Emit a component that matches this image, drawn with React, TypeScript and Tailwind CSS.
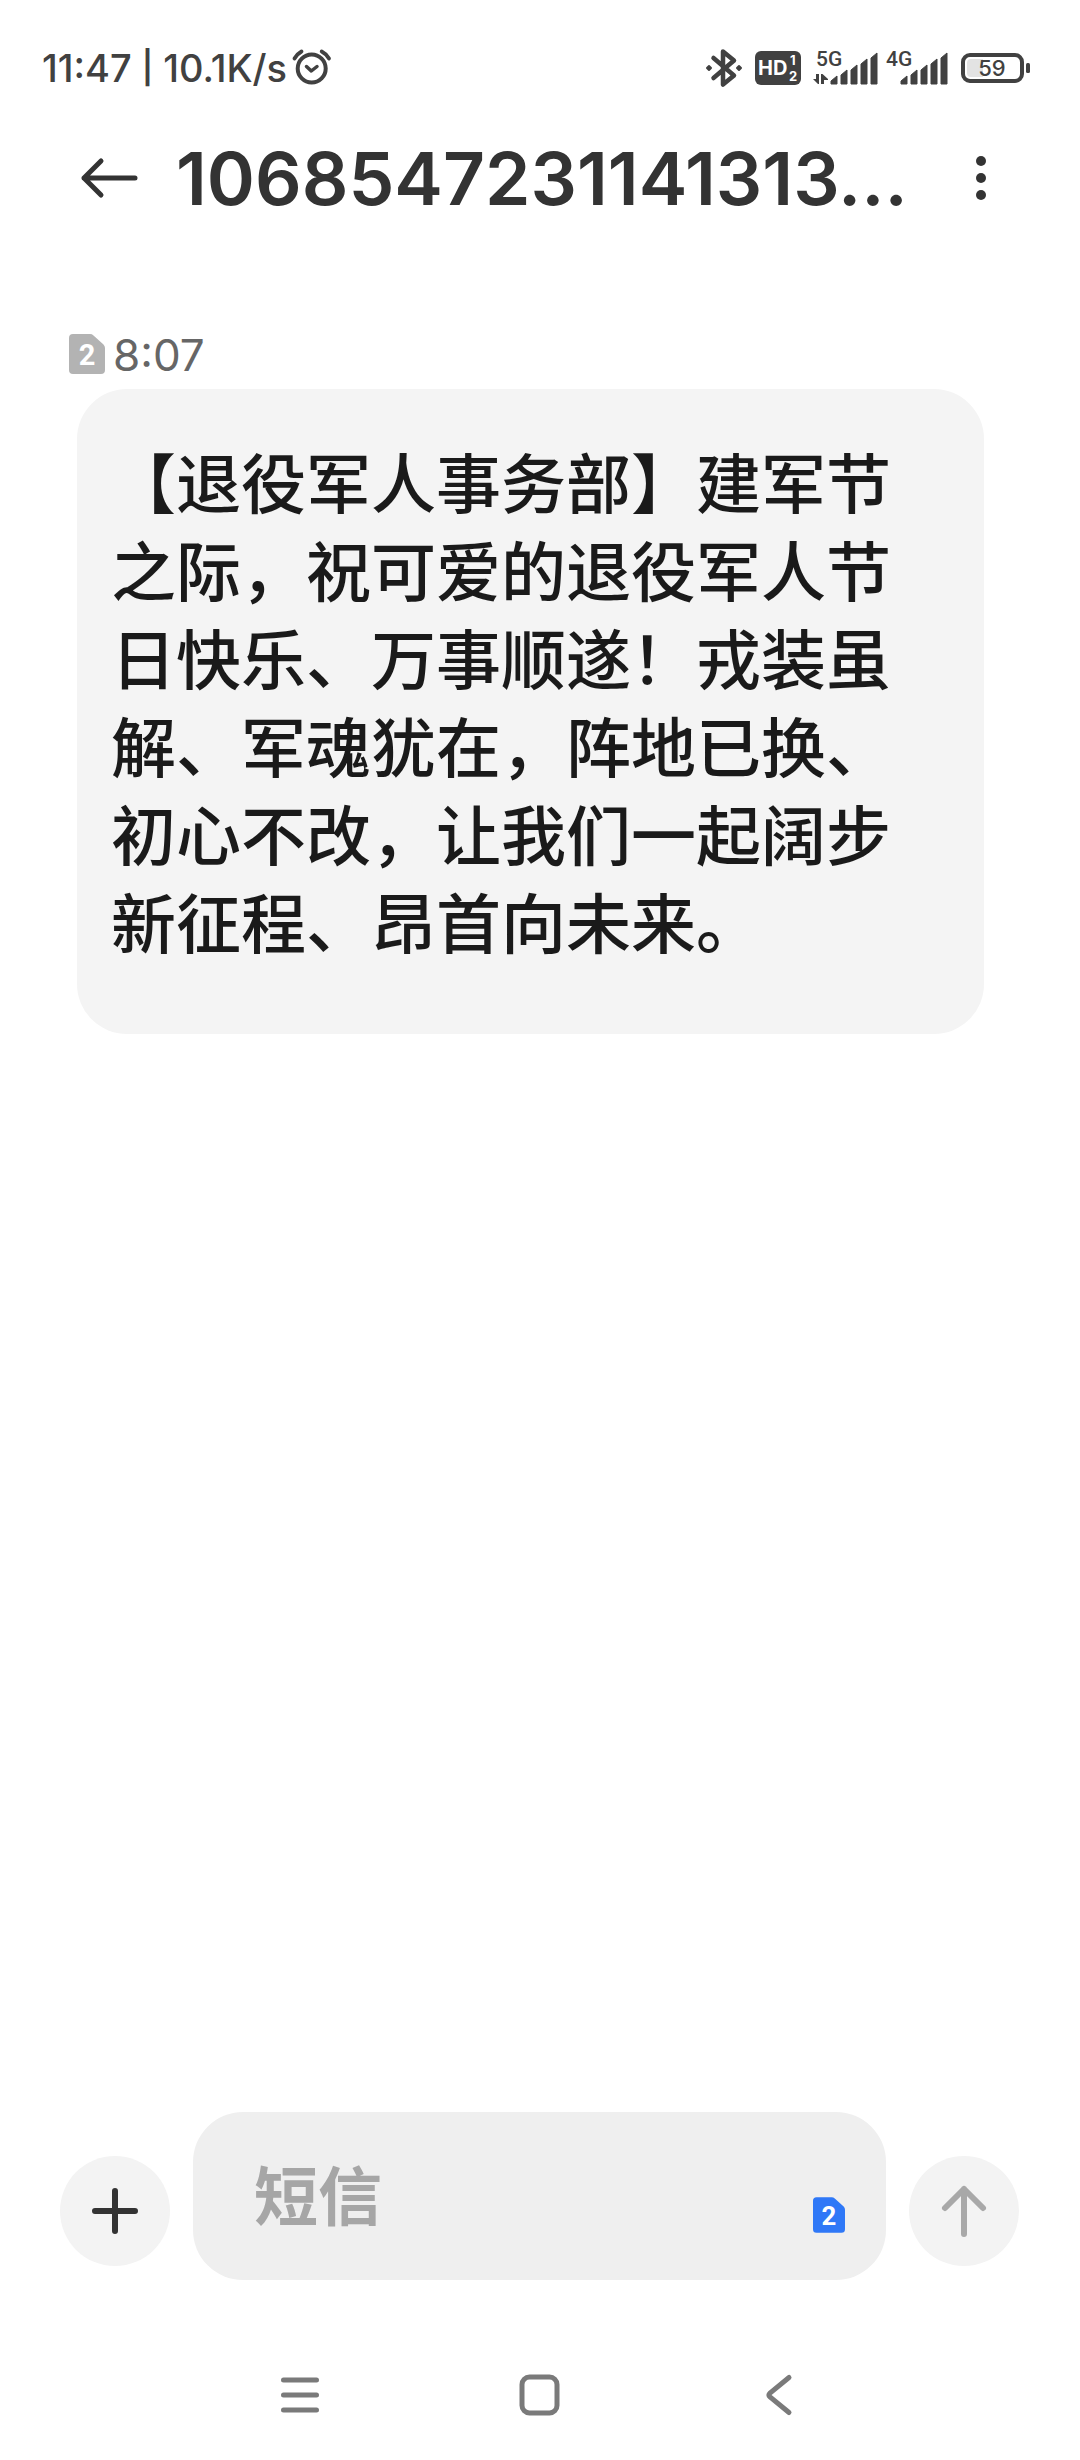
import { useState } from 'react';

const message =
  '【退役军人事务部】建军节之际，祝可爱的退役军人节日快乐、万事顺遂！戎装虽解、军魂犹在，阵地已换、初心不改，让我们一起阔步新征程、昂首向未来。';

// SIM card shape with the slot number on it
function SimBadge({ className }: { className: string }) {
  return (
    <svg viewBox="0 0 36 40" className={className} aria-hidden="true">
      <path d="M4 0H21Q23 0 24.500 1.400L34.500 10.500Q36 12 36 14V36Q36 40 32 40H4Q0 40 0 36V4Q0 0 4 0Z" fill="currentColor" />
      <text x="18" y="31" textAnchor="middle" fontSize="29" fontWeight="700" fill="#fff" className="font-['Roboto',sans-serif]">
        2
      </text>
    </svg>
  );
}

function AlarmIcon() {
  return (
    <svg viewBox="0 0 42 40" className="h-10 w-[42px]" fill="none" stroke="currentColor" strokeWidth="4" strokeLinecap="round" strokeLinejoin="round">
      <circle cx="20.700" cy="20.500" r="14" />
      <path d="M15.500 18.500L20.300 23L26 18.500" strokeWidth="3.500" />
      <path d="M3.500 10.500Q6 6 10.500 3.500M30.700 3.500Q35.500 6 38 10.500" strokeWidth="3.800" />
    </svg>
  );
}

function BluetoothIcon() {
  return (
    <svg viewBox="0 0 38 42" className="h-[42px] w-[38px]" fill="none" stroke="currentColor" strokeWidth="4.500" strokeLinecap="round" strokeLinejoin="round">
      <path d="M8.500 11L29 28.500L18 37.500V4.500L29 13.500L8.500 31" />
      <path d="M2 21L4 19L6 21L4 23ZM32 21L34 19L36 21L34 23Z" fill="currentColor" strokeWidth="2" />
    </svg>
  );
}

function HdIcon() {
  return (
    <svg viewBox="0 0 46 34" className="h-[34px] w-[46px] font-['Inter',sans-serif]">
      <rect width="46" height="34" rx="6" fill="currentColor" />
      <g fill="#fff" fontWeight="700">
        <text x="3" y="24" fontSize="20">HD</text>
        <text x="35" y="14" fontSize="13">1</text>
        <text x="34" y="30" fontSize="13">2</text>
      </g>
    </svg>
  );
}

function SignalIcon({ label, data }: { label: string; data?: boolean }) {
  const x = data ? 18 : 15;
  const tops = [26, 20, 15, 9, 3];
  return (
    <svg
      viewBox={data ? '0 0 66 36' : '0 0 63 36'}
      className={data ? 'h-9 w-[66px] overflow-visible' : 'h-9 w-[63px] overflow-visible'}
      fill="currentColor"
    >
      <text x={data ? 3 : 0} y="16" fontSize="21" fontWeight="500" className="font-['Roboto',sans-serif]">
        {label}
      </text>
      {data && <path d="M0 29H3V24H6V34H5ZM8 34V24H9.500L15 29V30H11V34Z" />}
      {tops.map((top, i) => (
        <path
          key={top}
          d={`M${x + i * 10} ${top + 5}L${x + i * 10 + 6} ${top}V34H${x + i * 10}Z`}
          stroke="currentColor"
          strokeWidth="1"
          strokeLinejoin="round"
        />
      ))}
    </svg>
  );
}

function BatteryIcon() {
  return (
    <svg viewBox="0 0 69 30" className="h-[30px] w-[69px]">
      <rect x="2" y="2" width="59" height="26" rx="7" fill="none" stroke="currentColor" strokeWidth="4" />
      <path d="M10 6H22V24H10Q6 24 6 20V10Q6 6 10 6Z" fill="#e3e3e3" />
      <rect x="65" y="10" width="4" height="10" rx="1.500" fill="currentColor" />
      <text x="31" y="23" textAnchor="middle" fontSize="22" fontWeight="500" fill="currentColor" className="font-['Inter',sans-serif]">
        59
      </text>
    </svg>
  );
}

function StatusBar() {
  return (
    <div className="flex h-[136px] items-center justify-between pr-[50px] pl-[42px] text-[#414141]">
      <div className="flex items-center gap-1">
        <div className="flex items-center gap-[10px] text-[38px] leading-none font-medium">
          <span>11:47</span>
          <span className="text-[32px] font-semibold">|</span>
          <span>10.1K/s</span>
        </div>
        <AlarmIcon />
      </div>
      <div className="flex items-center">
        <BluetoothIcon />
        <div className="ml-3 flex items-center gap-3">
          <HdIcon />
          <div className="flex items-center gap-[7px]">
            <SignalIcon label="5G" data />
            <SignalIcon label="4G" />
          </div>
          <BatteryIcon />
        </div>
      </div>
    </div>
  );
}

export default function App() {
  const [text, setText] = useState('');

  return (
    <div className="flex min-h-screen flex-col bg-white font-['Inter','Noto_Sans_CJK_SC',sans-serif]">
      <StatusBar />

      {/* Header */}
      <header className="flex h-[84px] items-center pr-[75px] pl-20 text-[#333]">
        <button type="button" aria-label="返回">
          <svg viewBox="0 0 60 42" className="h-[42px] w-[60px]" fill="none" stroke="currentColor" strokeWidth="5" strokeLinecap="round" strokeLinejoin="round">
            <path d="M55 21H4M21 4L4 21L21 38" />
          </svg>
        </button>
        <h1 className="ml-9 flex-1 text-[73px] leading-none font-semibold whitespace-nowrap">1068547231141313...</h1>
        <button type="button" aria-label="更多">
          <svg viewBox="0 0 48 48" className="size-12" fill="currentColor">
            <circle cx="24" cy="7" r="5" />
            <circle cx="24" cy="24" r="5" />
            <circle cx="24" cy="41" r="5" />
          </svg>
        </button>
      </header>

      {/* Messages */}
      <main className="flex-1 pt-[110px] pr-24 pl-[69px]">
        <div className="flex h-[59px] items-start gap-2 pt-1 text-[#666]">
          <SimBadge className="h-10 w-9 text-[#b3b3b3]" />
          <time className="text-[44px] leading-[43px]">8:07</time>
        </div>
        <p className="ml-2 rounded-[50px] bg-[#f4f4f4] px-[34px] pt-[52px] pb-[65px] text-[65px] leading-[88px] font-medium text-[#1a1a1a]">
          {message}
        </p>
      </main>

      {/* Composer */}
      <form className="flex items-end gap-[23px] pr-[61px] pb-[50px] pl-[60px]" onSubmit={(e) => e.preventDefault()}>
        <button type="button" aria-label="添加" className="mb-[14px] flex size-[110px] items-center justify-center rounded-full bg-[#f3f3f3] text-[#333]">
          <svg viewBox="0 0 48 48" className="size-12" fill="none" stroke="currentColor" strokeWidth="6" strokeLinecap="round">
            <path d="M24 4V44M4 24H44" />
          </svg>
        </button>
        <div className="flex h-[168px] min-w-0 flex-1 items-center rounded-[50px] bg-[#efefef] pt-[2px] pr-[41px] pl-[61px]">
          <input
            type="text"
            aria-label="短信"
            placeholder="短信"
            value={text}
            onChange={(e) => setText(e.target.value)}
            className="h-[96px] min-w-0 flex-1 bg-transparent text-[64px] font-bold text-[#1a1a1a] outline-none placeholder:text-[#a6a6a6]"
          />
          <button type="button" aria-label="切换到卡 2" className="mb-[47px] self-end">
            <SimBadge className="h-9 w-8 text-[#2f78f7]" />
          </button>
        </div>
        <button type="submit" aria-label="发送" className="mb-[14px] flex size-[110px] items-center justify-center rounded-full bg-[#f3f3f3] text-[#a8a8a8]">
          <svg viewBox="0 0 48 56" className="h-14 w-12" fill="none" stroke="currentColor" strokeWidth="6" strokeLinecap="round" strokeLinejoin="round">
            <path d="M24 51V6M5 25L24 6L43 25" />
          </svg>
        </button>
      </form>

      {/* System navigation */}
      <nav className="grid h-[130px] grid-cols-3 items-center justify-items-center px-[180px] text-[#7a7a7a]">
        <button type="button" aria-label="最近任务">
          <svg viewBox="0 0 44 44" className="size-11" fill="none" stroke="currentColor" strokeWidth="5" strokeLinecap="round">
            <path d="M5.500 7H38.500M5.500 22H38.500M5.500 37H38.500" />
          </svg>
        </button>
        <button type="button" aria-label="主屏幕">
          <svg viewBox="0 0 44 44" className="size-11" fill="none" stroke="currentColor" strokeWidth="5">
            <rect x="4" y="4" width="35" height="36" rx="7.500" />
          </svg>
        </button>
        <button type="button" aria-label="后退">
          <svg viewBox="0 0 44 44" className="size-11" fill="none" stroke="currentColor" strokeWidth="5" strokeLinecap="round">
            <path d="M31 4.500L12 20Q10 22 12 24L31 39.500" />
          </svg>
        </button>
      </nav>
    </div>
  );
}
